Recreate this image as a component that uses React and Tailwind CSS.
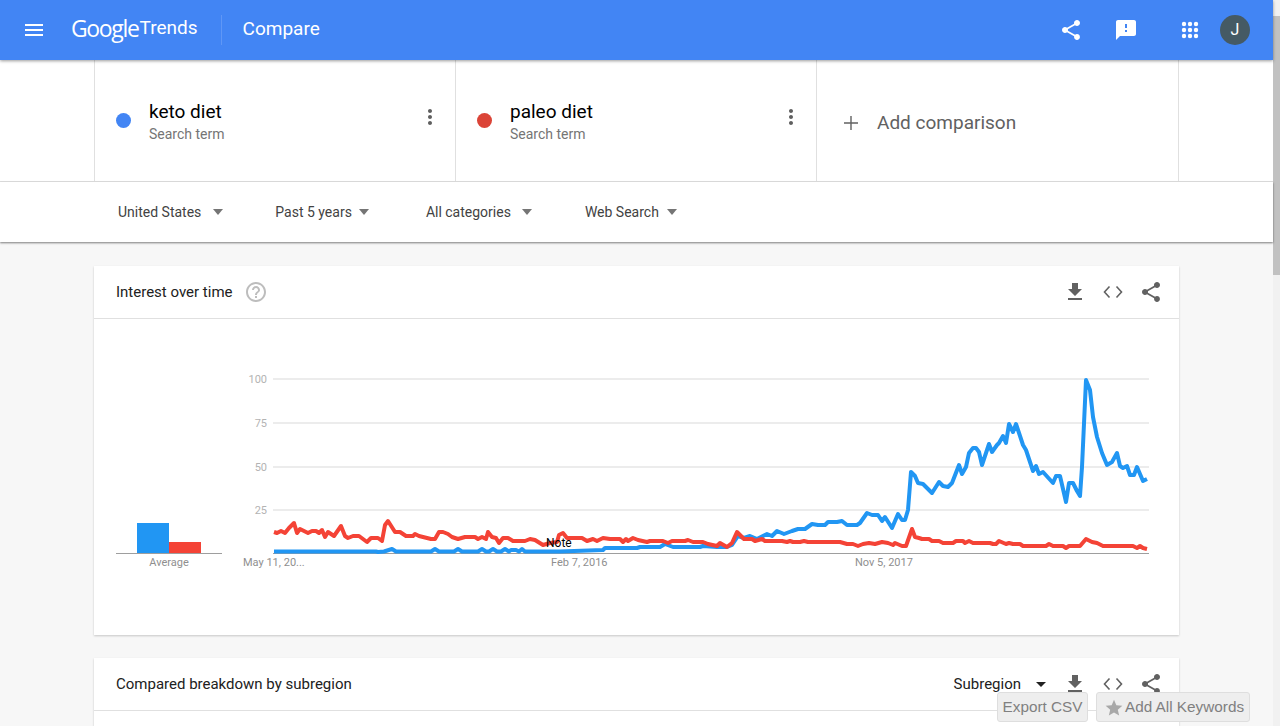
import React from 'react';

const BLUE_PTS = [
  [274,551.5],[376,551.5],[378,552],[384,551.5],[392,549],[396,551.5],[431,551.5],[435,549],[439,551.5],[454,551.5],[458,549],[462,551.5],[478,551.5],[482,549],[486,551.5],[489,551.5],[493,549],[497,551.5],[501,551.5],[505,549],[509,551.5],[511,550],[516,550],[519,551.5],[522,549],[525,551.5],[560,551.5],[603,550],[605,548],[637,548],[640,547],[660,547],[665,544],[673,547],[700,547],[703,546],[717,547],[727,547],[732,545],[738,536],[744,538],[750,536],[757,539],[767,534],[772,536],[777,531],[784,534],[792,531],[798,529],[805,529],[812,524],[818,525],[825,525],[828,522],[837,522],[842,521],[847,525],[857,525],[860,523],[867,513],[872,515],[878,515],[882,521],[885,517],[892,528],[898,514],[902,520],[905,520],[908,510],[911,472],[915,476],[918,483],[923,484],[932,493],[939,482],[943,486],[948,487],[952,483],[959,465],[962,474],[966,467],[969,453],[973,448],[976,448],[979,452],[982,465],[989,444],[992,452],[997,445],[999,443],[1003,436],[1006,443],[1009,424],[1013,432],[1016,424],[1023,445],[1026,450],[1033,471],[1036,466],[1039,474],[1043,472],[1053,483],[1056,476],[1060,476],[1066,502],[1069,483],[1073,483],[1077,491],[1080,496],[1082,467],[1086,380],[1090,390],[1093,417],[1097,437],[1102,453],[1107,465],[1112,462],[1117,453],[1120,466],[1123,468],[1127,466],[1130,475],[1134,475],[1137,467],[1143,481],[1147,479],
];

const RED_PTS = [
  [274,532],[277,533],[281,531],[285,533],[289,528],[294,523],[297,533],[300,529],[308,533],[312,531],[316,531],[319,533],[322,530],[325,537],[328,532],[334,536],[341,526],[345,536],[348,538],[353,536],[359,536],[367,542],[371,538],[378,538],[382,541],[385,525],[388,521],[395,532],[400,532],[406,536],[413,536],[415,534],[419,536],[423,537],[431,539],[435,539],[439,532],[443,532],[448,534],[452,537],[458,539],[465,537],[475,537],[478,539],[482,537],[486,539],[488,532],[492,537],[496,538],[499,543],[503,538],[508,538],[513,541],[525,541],[530,539],[535,540],[543,545],[550,543],[557,542],[559,535],[563,533],[567,538],[582,538],[587,541],[593,539],[597,541],[603,538],[610,539],[620,539],[623,542],[626,539],[628,541],[633,538],[638,540],[647,542],[650,541],[663,541],[668,543],[672,541],[685,541],[688,540],[693,542],[703,542],[708,544],[717,546],[720,543],[727,547],[732,543],[737,532],[744,539],[752,539],[755,541],[762,539],[765,541],[782,541],[787,542],[790,541],[793,542],[800,542],[804,541],[808,542],[840,542],[847,544],[853,544],[858,546],[863,544],[869,543],[875,544],[882,542],[888,543],[893,545],[895,543],[902,546],[906,546],[912,529],[915,537],[919,538],[922,539],[929,539],[932,541],[939,541],[943,543],[953,543],[956,541],[963,541],[965,543],[969,541],[973,543],[990,543],[993,544],[996,544],[999,541],[1006,544],[1009,543],[1013,544],[1020,544],[1023,546],[1046,546],[1049,544],[1053,546],[1063,546],[1066,548],[1069,546],[1080,546],[1086,539],[1092,542],[1097,543],[1103,546],[1133,546],[1137,548],[1140,546],[1143,548],[1147,549],
];

const toLine = (pts) => pts.map((p) => p.join(',')).join(' ');

const SHARE = 'M18 16.08c-.76 0-1.44.3-1.96.77L8.91 12.7c.05-.23.09-.46.09-.7s-.04-.47-.09-.7l7.05-4.11c.54.5 1.25.81 2.04.81 1.66 0 3-1.34 3-3s-1.34-3-3-3-3 1.34-3 3c0 .24.04.47.09.7L8.04 9.81C7.5 9.31 6.79 9 6 9c-1.66 0-3 1.34-3 3s1.34 3 3 3c.79 0 1.5-.31 2.04-.81l7.12 4.16c-.05.21-.08.43-.08.65 0 1.61 1.31 2.92 2.92 2.92 1.61 0 2.92-1.31 2.92-2.92s-1.31-2.92-2.92-2.92z';
const FEEDBACK = 'M20 2H4c-1.1 0-1.99.9-1.99 2L2 22l4-4h14c1.1 0 2-.9 2-2V4c0-1.1-.9-2-2-2zm-7 12h-2v-2h2v2zm0-4h-2V6h2v4z';
const DOWNLOAD = 'M19 9h-4V3H9v6H5l7 7 7-7zM5 18v2h14v-2H5z';
const MENU = 'M3 18h18v-2H3v2zm0-5h18v-2H3v2zm0-7v2h18V6H3z';
const DOTS = 'M12 8c1.1 0 2-.9 2-2s-.9-2-2-2-2 .9-2 2 .9 2 2 2zm0 2c-1.1 0-2 .9-2 2s.9 2 2 2 2-.9 2-2-.9-2-2-2zm0 6c-1.1 0-2 .9-2 2s.9 2 2 2 2-.9 2-2-.9-2-2-2z';
const HELP = 'M11 18h2v-2h-2v2zm1-16C6.48 2 2 6.48 2 12s4.48 10 10 10 10-4.48 10-10S17.52 2 12 2zm0 18c-4.41 0-8-3.59-8-8s3.59-8 8-8 8 3.59 8 8-3.59 8-8 8zm0-14c-2.21 0-4 1.79-4 4h2c0-1.1.9-2 2-2s2 .9 2 2c0 2-3 1.75-3 5h2c0-2.25 3-2.5 3-5 0-2.21-1.79-4-4-4z';
const STAR = 'M12 17.27L18.18 21l-1.64-7.03L22 9.24l-7.19-.61L12 2 9.19 8.63 2 9.24l5.46 4.73L5.82 21z';

function Icon({ d, className }) {
  return (
    <svg viewBox="0 0 24 24" className={className} fill="currentColor">
      <path d={d} />
    </svg>
  );
}

function AppsIcon({ className }) {
  const spots = [6, 12, 18];
  return (
    <svg viewBox="0 0 24 24" className={className} fill="currentColor">
      {spots.map((y) => spots.map((x) => <circle key={`${x}-${y}`} cx={x} cy={y} r="2.2" />))}
    </svg>
  );
}

function CodeIcon({ className }) {
  return (
    <svg viewBox="0 0 24 24" className={className} fill="none" stroke="currentColor" strokeWidth="1.6">
      <path d="M8.5 6.5L3.5 12l5 5.5M15.5 6.5l5 5.5-5 5.5" />
    </svg>
  );
}

function TermCell({ color, name }) {
  return (
    <div className="w-[361px] h-full border-l border-[#e0e0e0] flex items-center pl-[21px] pr-[13px]">
      <div className={`w-[15px] h-[15px] rounded-full ${color}`} />
      <div className="ml-[18px] flex-1 mt-[2px]">
        <div className="text-[19px] leading-[24px] text-black">{name}</div>
        <div className="text-[14px] leading-[20px] text-[#757575]">Search term</div>
      </div>
      <Icon d={DOTS} className="w-[24px] h-[24px] text-[#5f5f5f] -mt-[7px]" />
    </div>
  );
}

function FilterItem({ label, className, caretClass }) {
  return (
    <div className={`flex items-center text-[14px] text-[#424242] ${className}`}>
      <span>{label}</span>
      <span className={`w-0 h-0 border-x-[5px] border-x-transparent border-t-[6px] border-t-[#757575] ${caretClass}`} />
    </div>
  );
}

function CardActions() {
  return (
    <div className="flex items-center gap-[14px] text-[#616161]">
      <Icon d={DOWNLOAD} className="w-[24px] h-[24px]" />
      <CodeIcon className="w-[24px] h-[24px]" />
      <Icon d={SHARE} className="w-[24px] h-[24px]" />
    </div>
  );
}

function Chart() {
  const grid = [
    [379, '100'],
    [423, '75'],
    [467, '50'],
    [510, '25'],
  ];
  // viewBox uses the picture's own coordinates so the traced points stay readable
  return (
    <svg viewBox="94 319 1085 316" className="block w-[1085px] h-[316px]" fontFamily="Roboto, sans-serif">
      {grid.map(([y, label]) => (
        <g key={label}>
          <line x1="273" x2="1149" y1={y} y2={y} stroke="#e6e6e6" strokeWidth="1.5" />
          <text x="267" y={y + 4} textAnchor="end" fontSize="11" fill="#b3b3b3">{label}</text>
        </g>
      ))}
      <line x1="273" x2="1149" y1="553.5" y2="553.5" stroke="#9e9e9e" strokeWidth="1" />
      <polyline points={toLine(BLUE_PTS)} fill="none" stroke="#2196f3" strokeWidth="4" strokeLinejoin="round" />
      <polyline points={toLine(RED_PTS)} fill="none" stroke="#f44336" strokeWidth="4" strokeLinejoin="round" />

      <rect x="137" y="523" width="32" height="30" fill="#2196f3" />
      <rect x="169" y="542" width="32" height="11" fill="#f44336" />
      <line x1="116" x2="222" y1="553.5" y2="553.5" stroke="#9e9e9e" strokeWidth="1" />

      <text x="169" y="566" textAnchor="middle" fontSize="11" fill="#8f8f8f">Average</text>
      <text x="243" y="566" fontSize="11" fill="#8f8f8f">May 11, 20...</text>
      <text x="551" y="566" fontSize="11" fill="#8f8f8f">Feb 7, 2016</text>
      <text x="855" y="566" fontSize="11" fill="#8f8f8f">Nov 5, 2017</text>
      <text x="546" y="547" fontSize="12" fill="#000">Note</text>
    </svg>
  );
}

export default function App() {
  return (
    <div className="relative flex w-[1280px] h-[726px] overflow-hidden bg-[#f7f7f7] font-['Roboto',sans-serif]">
      <div className="w-[1273px] h-full flex flex-col">
        {/* Top bar */}
        <header className="relative z-20 h-[60px] shrink-0 bg-[#4285f4] flex items-center text-white shadow-[0_1px_3px_rgba(0,0,0,0.4)]">
          <Icon d={MENU} className="ml-[22px] w-[24px] h-[24px]" />
          <div className="ml-[25px] flex items-center -mt-[3px]">
            <span className="font-['Open_Sans',sans-serif] text-[23px] tracking-[-1.35px]">Google</span>
            <span className="ml-[1px] text-[19px]">Trends</span>
          </div>
          <div className="ml-[23px] w-px h-[30px] bg-[#5f97f6]" />
          <div className="ml-[21px] text-[19px] -mt-[1px]">Compare</div>
          <div className="ml-auto flex items-center">
            <Icon d={SHARE} className="w-[24px] h-[24px]" />
            <Icon d={FEEDBACK} className="ml-[31px] w-[24px] h-[24px]" />
            <AppsIcon className="ml-[40px] w-[24px] h-[24px]" />
            <div className="ml-[18px] mr-[23px] w-[30px] h-[30px] rounded-full bg-[#455a64] flex items-center justify-center text-[16px]">J</div>
          </div>
        </header>

        {/* Search terms */}
        <div className="h-[122px] shrink-0 bg-white border-b border-[#e0e0e0] flex pl-[94px]">
          <TermCell color="bg-[#4285f4]" name="keto diet" />
          <TermCell color="bg-[#db4437]" name="paleo diet" />
          <div className="w-[363px] h-full border-x border-[#e0e0e0] flex items-center pl-[22px] pt-[5px] text-[#616161]">
            <svg viewBox="0 0 24 24" className="w-[24px] h-[24px]" fill="currentColor"><path d="M19 12.7h-6.3V19h-1.4v-6.3H5v-1.4h6.3V5h1.4v6.3H19z" /></svg>
            <span className="ml-[14px] text-[19px]">Add comparison</span>
          </div>
        </div>

        {/* Filters */}
        <div className="relative z-10 h-[60px] shrink-0 bg-white flex items-center pl-[118px] shadow-[0_1px_2px_rgba(0,0,0,0.5)]">
          <FilterItem label="United States" caretClass="ml-[12px]" />
          <FilterItem label="Past 5 years" className="ml-[52px]" caretClass="ml-[7px]" />
          <FilterItem label="All categories" className="ml-[57px]" caretClass="ml-[11px]" />
          <FilterItem label="Web Search" className="ml-[53px]" caretClass="ml-[8px]" />
        </div>

        {/* Interest over time */}
        <section className="mt-[24px] ml-[94px] w-[1085px] shrink-0 bg-white shadow-[0_1px_2px_rgba(0,0,0,0.2)]">
          <div className="h-[53px] border-b border-[#e0e0e0] flex items-center pl-[22px] pr-[16px]">
            <span className="text-[15px] text-[#212121]">Interest over time</span>
            <Icon d={HELP} className="ml-[11px] w-[24px] h-[24px] text-[#bdbdbd]" />
            <div className="ml-auto"><CardActions /></div>
          </div>
          <Chart />
        </section>

        {/* Compared breakdown */}
        <section className="mt-[23px] ml-[94px] w-[1085px] flex-1 bg-white shadow-[0_1px_2px_rgba(0,0,0,0.2)]">
          <div className="h-[53px] border-b border-[#e0e0e0] flex items-center pl-[22px] pr-[16px]">
            <span className="text-[15px] text-[#212121]">Compared breakdown by subregion</span>
            <div className="ml-auto flex items-center">
              <span className="text-[15px] text-[#212121]">Subregion</span>
              <span className="ml-[15px] mr-[17px] w-0 h-0 border-x-[5px] border-x-transparent border-t-[5px] border-t-[#212121]" />
              <CardActions />
            </div>
          </div>
        </section>
      </div>

      {/* Page scrollbar */}
      <div className="w-[7px] h-full bg-[#f1f1f1] flex flex-col">
        <div className="h-[16px]" />
        <div className="h-[259px] bg-[#c1c1c1]" />
      </div>

      {/* Extension buttons floating over the page */}
      <div className="absolute left-[997px] top-[692px] flex gap-[8px] font-['Liberation_Sans',sans-serif] text-[15.3px] text-[#808080]">
        <div className="h-[30px] w-[91px] pt-[1px] rounded-[3px] border border-[#dedede] bg-[#eeeeee] flex items-center justify-center">Export CSV</div>
        <div className="h-[30px] w-[154px] pt-[1px] rounded-[3px] border border-[#dedede] bg-[#eeeeee] flex items-center pl-[7px]">
          <Icon d={STAR} className="w-[20px] h-[20px] text-[#a8a8a8] mr-[1px]" />
          Add All Keywords
        </div>
      </div>
    </div>
  );
}
